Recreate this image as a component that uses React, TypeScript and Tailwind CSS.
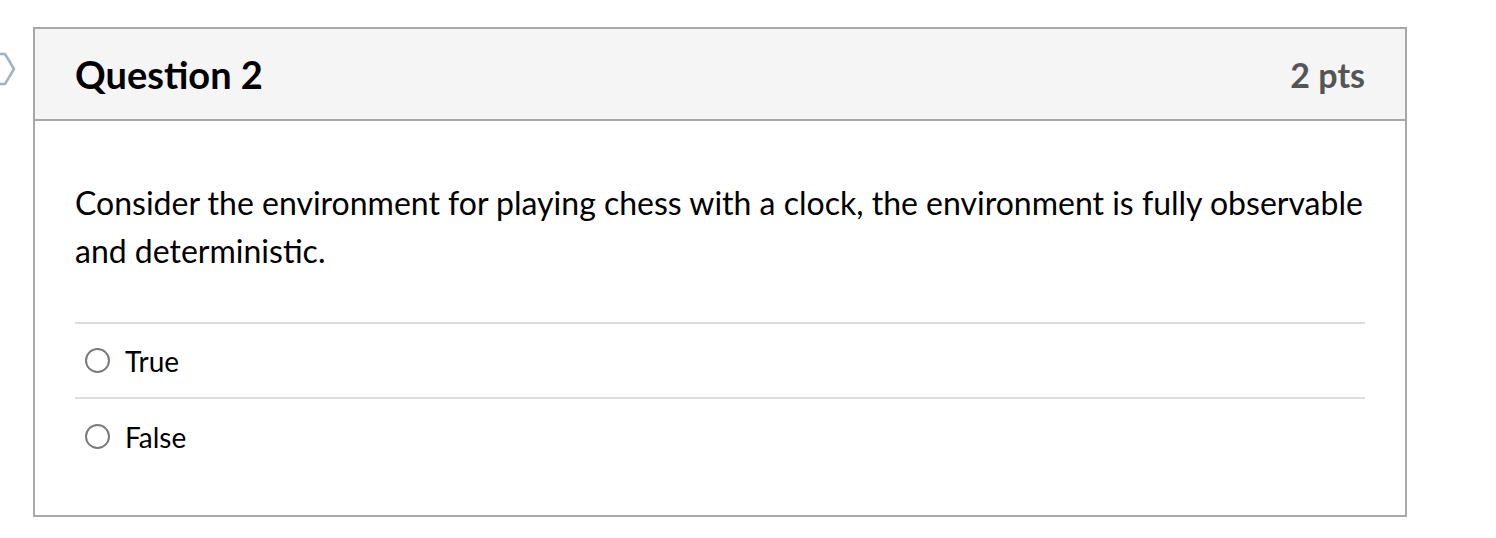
export default function App() {
  const answers = ['True', 'False']

  return (
    <div className="relative h-[538px] w-[1496px] bg-white font-['Lato','Liberation_Sans',sans-serif] text-[#2d3b45]">
      {/* Collapsed nav chevron, cut off at the left edge */}
      <svg className="absolute left-0 top-[52px]" width="16" height="34" viewBox="0 0 16 34" fill="none">
        <path d="M-6 2 H5 L14 17 L5 32 H-6" stroke="#9fb3c4" strokeWidth="2.5" strokeLinejoin="round" />
      </svg>

      <div className="pl-[33px] pt-[27px]">
        <div className="w-[1374px] border-2 border-[#a8a8a8] bg-white">
          {/* Header */}
          <div className="flex h-[92px] items-center justify-between border-b-2 border-[#a8a8a8] bg-[#f5f5f5] px-[40px]">
            <h2 className="text-[38px] font-bold text-black">Question 2</h2>
            <span className="text-[34px] font-bold text-[#555]">2 pts</span>
          </div>

          {/* Body */}
          <div className="px-[40px] pb-[41px] pt-[58px]">
            <p className="text-[32px] leading-[48px] text-black">
              Consider the environment for playing chess with a clock, the environment is fully observable and
              deterministic.
            </p>

            <div className="mt-[47px] border-t-2 border-[#dcdcdc]">
              {answers.map((a, i) => (
                <div
                  key={a}
                  className={`flex h-[75px] items-center gap-[15px] pl-[10px] ${i < answers.length - 1 ? 'border-b-2 border-[#dcdcdc]' : ''}`}
                >
                  <span className="h-[25px] w-[25px] rounded-full border-2 border-[#7a7a7a] bg-white" />
                  <span className="text-[28px] text-black">{a}</span>
                </div>
              ))}
            </div>
          </div>
        </div>
      </div>
    </div>
  )
}
